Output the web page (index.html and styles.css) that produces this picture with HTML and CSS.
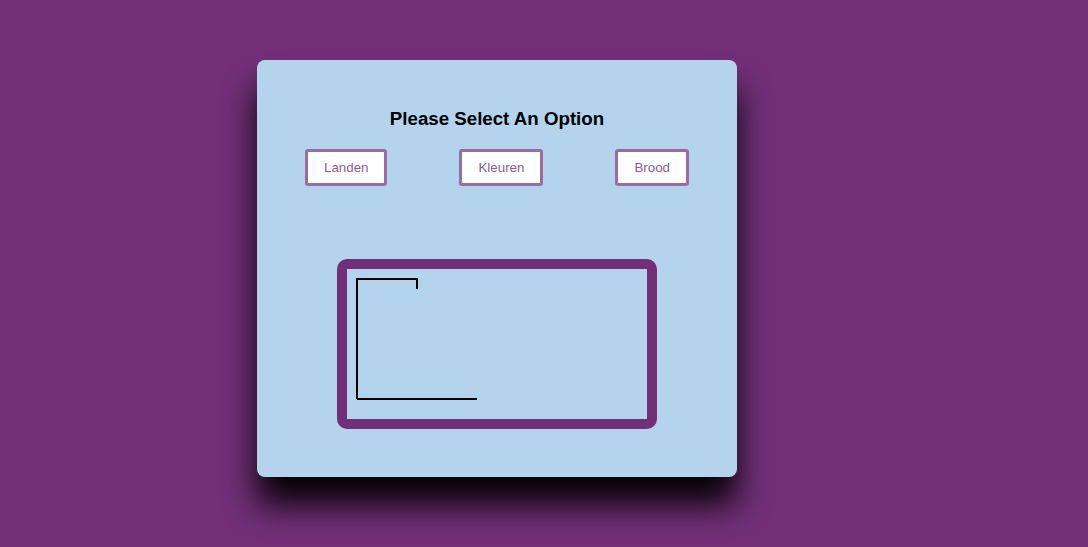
FILE: index.html
```html
<!DOCTYPE html>
<html lang="en">
<head>
  <meta charset="UTF-8">
  <title>Galgje</title>
  <link rel="stylesheet" href="styles.css">
</head>
<body>
  <div class="container">
    <h2>Please Select An Option</h2>
    <div class="options">
      <button>Landen</button>
      <button>Kleuren</button>
      <button>Brood</button>
    </div>
    <div class="board">
      <svg class="gallows" width="300" height="150" viewBox="0 0 300 150">
        <polyline points="10,130 10,10 70,10 70,20" fill="none" stroke="#000" stroke-width="2"/>
        <line x1="10" y1="130" x2="130" y2="130" stroke="#000" stroke-width="2"/>
      </svg>
    </div>
  </div>
</body>
</html>
```

FILE: styles.css
```css
body {
  margin: 0;
  background-color: #722f78;
  font-family: 'Liberation Sans', Arial, sans-serif;
  height: 547px;
  overflow: hidden;
}

.container {
  width: 480px;
  margin: 60px 0 0 257px;
  padding: 48px 0 48px;
  box-sizing: border-box;
  background: #b3d4ec;
  border-radius: 8px;
  box-shadow: 0 28px 32px rgba(0, 0, 0, 0.95);
  display: flex;
  flex-direction: column;
  align-items: center;
}

h2 {
  margin: 0;
  font-size: 18.7px;
  line-height: 22px;
  color: #000;
}

.options {
  display: flex;
  justify-content: center;
  gap: 72px;
  margin-top: 19px;
}

.options button {
  font-family: 'Liberation Sans', Arial, sans-serif;
  font-size: 13.33px;
  padding: 8px 16px;
  background: #fff;
  color: #8c5c90;
  border: 3px solid #9d6c9e;
  border-radius: 3px;
}

.board {
  margin-top: 73px;
  border: 10px solid #722f78;
  border-radius: 10px;
  line-height: 0;
}

.gallows {
  display: block;
}
```
